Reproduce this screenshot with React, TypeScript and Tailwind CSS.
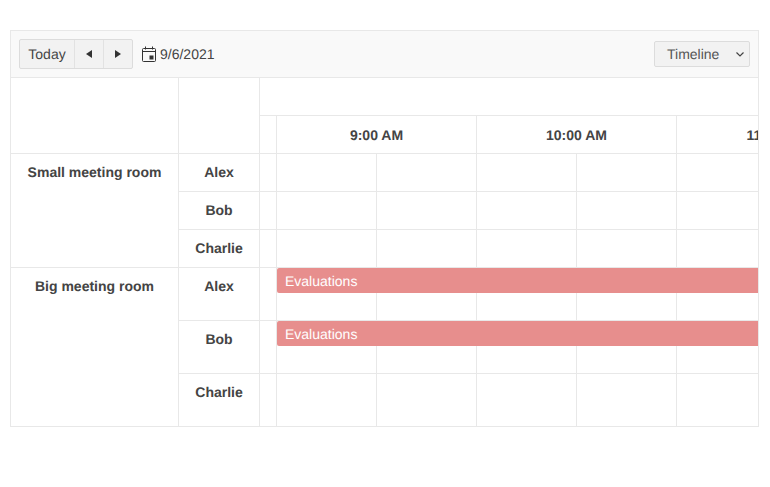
import React from "react";

const line = "border-[#e8e8e8]";

const groups = [
  { name: "Small meeting room", rowClass: "h-[38px]", appt: false },
  { name: "Big meeting room", rowClass: "h-[53px]", appt: true },
];
const people = ["Alex", "Bob", "Charlie"];
const hours = ["9:00 AM", "10:00 AM", "11:00 AM", "12:00 PM"];

const Row = ({ rowClass, appt, last }: { rowClass: string; appt: boolean; last: boolean }) => (
  <div className={`relative flex ${rowClass} ${last ? "" : `border-b ${line}`}`}>
    <div className={`w-[17px] shrink-0 border-r ${line}`} />
    {Array.from({ length: 6 }).map((_, i) => (
      <div key={i} className={`w-[100px] shrink-0 border-r ${line}`} />
    ))}
    {appt && (
      <div className="absolute left-[17px] top-0 flex h-[25px] w-[600px] items-center rounded-l-[2px] bg-[#e78e8d] pl-2 text-sm text-white">
        Evaluations
      </div>
    )}
  </div>
);

export default function App() {
  return (
    <div className="h-[487px] w-[770px] bg-white pl-[10px] pt-[30px] font-['Liberation_Sans',Arial,sans-serif] text-sm text-[#444] [text-rendering:geometricPrecision]">
      <div className={`w-[749px] border ${line}`}>
        <div className={`flex h-[47px] items-center justify-between border-b ${line} bg-[#f9f9f9] pl-2 pr-2`}>
          <div className="flex items-center">
            <div className="flex h-[30px] items-center rounded-[2px] border border-[#dcdcdc] bg-[#f2f2f2]">
              <div className="flex h-full w-[54px] items-center justify-center">Today</div>
              <div className="flex h-full w-[29px] items-center justify-center border-l border-[#e2e2e2]">
                <svg width="6" height="8" viewBox="0 0 6 8"><path d="M0 4 L6 0 V8 Z" fill="#333" /></svg>
              </div>
              <div className="flex h-full w-[29px] items-center justify-center border-l border-[#e2e2e2]">
                <svg width="6" height="8" viewBox="0 0 6 8"><path d="M6 4 L0 0 V8 Z" fill="#333" /></svg>
              </div>
            </div>
            <div className="ml-[8px] flex items-center gap-[3px]">
              <svg width="16" height="16" viewBox="0 0 16 16" fill="none" stroke="#333" strokeWidth="1">
                <rect x="1.5" y="2.5" width="13" height="13" rx="1" />
                <path d="M1.5 5.5 H14.5 M4.5 0.5 V3.5 M11.5 0.5 V3.5" />
                <rect x="8.5" y="9.5" width="4" height="4" fill="#333" stroke="none" />
              </svg>
              <span>9/6/2021</span>
            </div>
          </div>
          <div className="flex h-[26px] w-[96px] items-center justify-between rounded-[2px] border border-[#dcdcdc] bg-[#f2f2f2] pl-[12px] pr-[5px] text-[#555]">
            <span>Timeline</span>
            <svg width="8" height="5" viewBox="0 0 8 5" fill="none" stroke="#444" strokeWidth="1.2"><path d="M0.5 0.5 L4 4 L7.5 0.5" /></svg>
          </div>
        </div>

        <div className="flex">
          <div className={`w-[168px] shrink-0 border-r ${line}`}>
            <div className={`h-[76px] border-b ${line}`} />
            {groups.map((g, gi) => (
              <div
                key={g.name}
                className={`${gi === 0 ? `h-[114px] border-b ${line}` : "h-[158px]"} pt-[10px] text-center font-bold leading-4`}
              >
                {g.name}
              </div>
            ))}
          </div>

          <div className={`w-[81px] shrink-0 border-r ${line}`}>
            <div className={`h-[76px] border-b ${line}`} />
            {groups.map((g, gi) =>
              people.map((p, pi) => (
                <div
                  key={g.name + p}
                  className={`${gi === 1 && pi === 2 ? "h-[52px]" : `${g.rowClass} border-b ${line}`} pt-[10px] text-center font-bold leading-4`}
                >
                  {p}
                </div>
              )),
            )}
          </div>

          <div className="min-w-0 flex-1 overflow-hidden">
            <div className={`h-[38px] border-b ${line}`} />
            <div className={`flex h-[38px] border-b ${line}`}>
              <div className={`w-[17px] shrink-0 border-r ${line}`} />
              {hours.map((h) => (
                <div key={h} className={`flex w-[200px] shrink-0 items-center justify-center border-r ${line} font-bold`}>
                  {h}
                </div>
              ))}
            </div>
            {groups.map((g, gi) =>
              people.map((p, pi) => (
                <Row
                  key={g.name + p}
                  rowClass={gi === 1 && pi === 2 ? "h-[52px]" : g.rowClass}
                  appt={g.appt && pi < 2}
                  last={gi === 1 && pi === 2}
                />
              )),
            )}
          </div>
        </div>
      </div>
    </div>
  );
}
